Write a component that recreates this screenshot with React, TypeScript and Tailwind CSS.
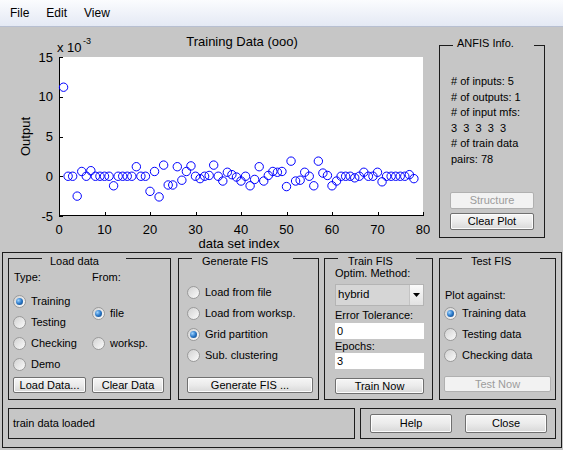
import React from "react";

const data = [
  11.2, 0, 0, -2.5, 0.6, 0, 0.7, 0, 0, 0,
  0, -1.2, 0, 0, 0, 0, 1.2, 0, 0, -1.9,
  0.6, -2.6, 1.4, -1.1, -1.1, 1.2, -0.5, 0.6, 1.3, 0,
  -0.3, 0, 0.1, 1.4, 0, -0.6, 0.5, 0.2, -0.1, -0.6,
  0, -1.2, -0.4, 1.2, -0.6, 0.1, 0.6, 0.5, 0.6, -1.3,
  1.9, -0.6, -0.5, 0.5, 0, -1.2, 1.9, 0.4, 0.1, -1.2,
  -0.6, 0, 0, 0, -0.2, 0, 0.5, 0, 0, 0.5,
  -0.7, 0, 0, 0, 0, 0, 0.2, -0.3,
];

// axes geometry (page coordinates)
const X0 = 59;
const X1 = 423;
const Y0 = 57;
const Y1 = 216;
const px = (i: number) => X0 + (i * (X1 - X0)) / 80;
const py = (v: number) => Y1 - ((v + 5) * (Y1 - Y0)) / 20;

function Chart() {
  const font = { fontFamily: "'Liberation Sans', Arial, sans-serif" };
  return (
    <svg width={430} height={225} viewBox="0 27 430 225" style={font} className="shrink-0">
      <rect x={X0} y={Y0} width={X1 - X0} height={Y1 - Y0} fill="#ffffff" />
      <line x1={X0 + 0.5} y1={Y0} x2={X0 + 0.5} y2={Y1} stroke="#000" />
      <line x1={X0} y1={Y1 - 0.5} x2={X1} y2={Y1 - 0.5} stroke="#000" />
      {[15, 10, 5, 0, -5].map((v) => (
        <g key={v}>
          <line x1={X0} y1={Math.round(py(v)) + 0.5} x2={X0 + 4} y2={Math.round(py(v)) + 0.5} stroke="#000" />
          <text x={53} y={py(v) + 4.5} fontSize={13} textAnchor="end" fill="#000">
            {v}
          </text>
        </g>
      ))}
      {[0, 10, 20, 30, 40, 50, 60, 70, 80].map((i) => (
        <g key={i}>
          <line x1={Math.round(px(i)) + 0.5} y1={Y1} x2={Math.round(px(i)) + 0.5} y2={Y1 - 4} stroke="#000" />
          <text x={px(i)} y={234} fontSize={13} textAnchor="middle" fill="#000">
            {i}
          </text>
        </g>
      ))}
      {data.map((v, k) => (
        <circle key={k} cx={px(k + 1)} cy={py(v)} r={4.2} fill="none" stroke="#0000ff" strokeWidth={1} />
      ))}
      <text x={242} y={46} fontSize={13} textAnchor="middle" fill="#000">
        Training Data (ooo)
      </text>
      <text x={57} y={52} fontSize={13} fill="#000">
        x 10
      </text>
      <text x={83} y={44} fontSize={9} fill="#000">
        -3
      </text>
      <text x={239} y={248} fontSize={13} textAnchor="middle" fill="#000">
        data set index
      </text>
      <text x={30} y={136.5} fontSize={13} textAnchor="middle" fill="#000" transform="rotate(-90 30 136.5)">
        Output
      </text>
    </svg>
  );
}

function Radio({ checked, label }: { checked?: boolean; label: string }) {
  return (
    <div className="flex items-center h-[21px]">
      <span className="w-[13px] h-[13px] rounded-full border border-[#9a9a9a] bg-linear-to-br from-[#d2d2d2] to-[#fbfbfb] flex items-center justify-center shrink-0">
        {checked && (
          <span className="w-[7px] h-[7px] rounded-full bg-radial-[at_35%_35%] from-[#9fd4ff] via-[#2a78c8] to-[#123f74]" />
        )}
      </span>
      <span className="ml-[5px] leading-[13px]">{label}</span>
    </div>
  );
}

function Btn({
  children,
  disabled,
  className,
}: {
  children: React.ReactNode;
  disabled?: boolean;
  className: string;
}) {
  return (
    <button
      className={`${className} flex items-center justify-center rounded-[2px] leading-[13px] ${
        disabled
          ? "border border-[#b0b0b0] bg-[#f2f2f2] text-[#9c9c9c]"
          : "border border-[#707070] bg-linear-to-b from-[#f6f6f6] via-[#ebebeb] to-[#d8d8d8] text-black shadow-[inset_0_0_0_1px_#fcfcfc]"
      }`}
    >
      {children}
    </button>
  );
}

export default function App() {
  return (
    <div className="w-[563px] h-[450px] bg-[#c6c6c6] text-[11px] text-black font-['Liberation_Sans',Arial,sans-serif] overflow-hidden">
      {/* menu bar */}
      <div className="h-[27px] flex items-center bg-linear-to-b from-[#fbfcfe] to-[#e4e9f4] border-b border-[#b7bfd1] text-[12px]">
        <span className="ml-[10px]">File</span>
        <span className="ml-[17px]">Edit</span>
        <span className="ml-[17px]">View</span>
      </div>

      {/* plot + info */}
      <div className="h-[225px] flex">
        <Chart />
        <div className="relative ml-[9px] mt-[18px] w-[106px] h-[193px] border border-[#1c1c1c]">
          <span className="absolute top-[-9px] left-[13px] w-[81px] pl-[4px] h-[13px] leading-[13px] bg-[#c6c6c6]">
            ANFIS Info.
          </span>
          <div className="pl-[11px] pt-[28px] leading-[15.5px]">
            <div># of inputs: 5</div>
            <div># of outputs: 1</div>
            <div># of input mfs:</div>
            <div className="whitespace-pre">3  3  3  3  3</div>
            <div># of train data</div>
            <div>pairs: 78</div>
          </div>
          <div className="ml-[10px] mt-[25px] flex flex-col gap-[4px]">
            <Btn disabled className="w-[84px] h-[17px]">Structure</Btn>
            <Btn className="w-[84px] h-[17px]">Clear Plot</Btn>
          </div>
        </div>
      </div>

      {/* bottom controls */}
      <div className="ml-[2px] w-[560px] h-[196px] border border-[#1c1c1c] pt-[5px] pl-[5px]">
        <div className="flex h-[142px]">
          {/* Load data */}
          <div className="relative w-[163px] h-[142px] border border-[#1c1c1c]">
            <span className="absolute top-[-4px] left-[33px] w-[84px] pl-[8px] h-[13px] leading-[13px] bg-[#c6c6c6]">
              Load data
            </span>
            <div className="pl-[5px] pt-[12px] flex">
              <div className="w-[78px]">
                <div className="h-[13px] leading-[13px]">Type:</div>
                <div className="mt-[7px] -ml-[1px]">
                  <Radio checked label="Training" />
                  <Radio label="Testing" />
                  <Radio label="Checking" />
                  <Radio label="Demo" />
                </div>
              </div>
              <div>
                <div className="h-[13px] leading-[13px]">From:</div>
                <div className="mt-[19px]">
                  <Radio checked label="file" />
                </div>
                <div className="mt-[9px]">
                  <Radio label="worksp." />
                </div>
              </div>
            </div>
            <div className="flex ml-[4px] mt-[2px] gap-[6px]">
              <Btn className="w-[73px] h-[16px]">Load Data...</Btn>
              <Btn className="w-[72px] h-[16px]">Clear Data</Btn>
            </div>
          </div>

          {/* Generate FIS */}
          <div className="relative ml-[7px] w-[141px] h-[142px] border border-[#1c1c1c]">
            <span className="absolute top-[-4px] left-[13px] w-[101px] pl-[10px] h-[13px] leading-[13px] bg-[#c6c6c6]">
              Generate FIS
            </span>
            <div className="pl-[8px] pt-[23px]">
              <Radio label="Load from file" />
              <Radio label="Load from worksp." />
              <Radio checked label="Grid partition" />
              <Radio label="Sub. clustering" />
            </div>
            <Btn className="ml-[8px] mt-[11px] w-[126px] h-[16px]">Generate FIS ...</Btn>
          </div>

          {/* Train FIS */}
          <div className="relative ml-[5px] w-[109px] h-[142px] border border-[#1c1c1c]">
            <span className="absolute top-[-4px] left-[13px] w-[78px] pl-[10px] h-[13px] leading-[13px] bg-[#c6c6c6]">
              Train FIS
            </span>
            <div className="pl-[10px] pt-[8px]">
              <div className="h-[13px] leading-[13px]">Optim. Method:</div>
              <div className="mt-[4px] w-[89px] h-[22px] flex border border-[#b4b4b4] bg-[#d6d6d6]">
                <span className="flex-1 pl-[2px] flex items-center text-[11.5px]">hybrid</span>
                <span className="w-[14px] h-full flex items-center justify-center bg-linear-to-b from-[#fafafa] to-[#e2e2e2] border-l border-[#c4c4c4]">
                  <svg width="7" height="4" viewBox="0 0 7 4">
                    <path d="M0 0h7L3.5 4z" fill="#000" />
                  </svg>
                </span>
              </div>
              <div className="mt-[3px] h-[13px] leading-[13px]">Error Tolerance:</div>
              <div className="mt-[1px] w-[89px] h-[16px] bg-white flex items-center pl-[2px]">0</div>
              <div className="mt-[1px] h-[13px] leading-[13px]">Epochs:</div>
              <div className="w-[89px] h-[16px] bg-white flex items-center pl-[2px]">3</div>
              <Btn className="mt-[9px] w-[89px] h-[16px]">Train Now</Btn>
            </div>
          </div>

          {/* Test FIS */}
          <div className="relative ml-[6px] w-[117px] h-[142px] border border-[#1c1c1c]">
            <span className="absolute top-[-4px] left-[22px] w-[78px] pl-[9px] h-[13px] leading-[13px] bg-[#c6c6c6]">
              Test FIS
            </span>
            <div className="pl-[4px] pt-[30px]">
              <div className="ml-[1px] h-[13px] leading-[13px]">Plot against:</div>
              <div className="mt-[1px]">
                <Radio checked label="Training data" />
                <Radio label="Testing data" />
                <Radio label="Checking data" />
              </div>
              <Btn disabled className="mt-[10px] w-[107px] h-[16px]">Test Now</Btn>
            </div>
          </div>
        </div>

        <div className="flex mt-[8px] h-[31px]">
          <div className="w-[347px] h-[31px] border border-[#1c1c1c] flex items-center pl-[4px]">
            train data loaded
          </div>
          <div className="ml-[5px] w-[196px] h-[31px] border border-[#1c1c1c] flex items-center pl-[9px] gap-[13px]">
            <Btn className="w-[82px] h-[19px]">Help</Btn>
            <Btn className="w-[82px] h-[19px]">Close</Btn>
          </div>
        </div>
      </div>
    </div>
  );
}
